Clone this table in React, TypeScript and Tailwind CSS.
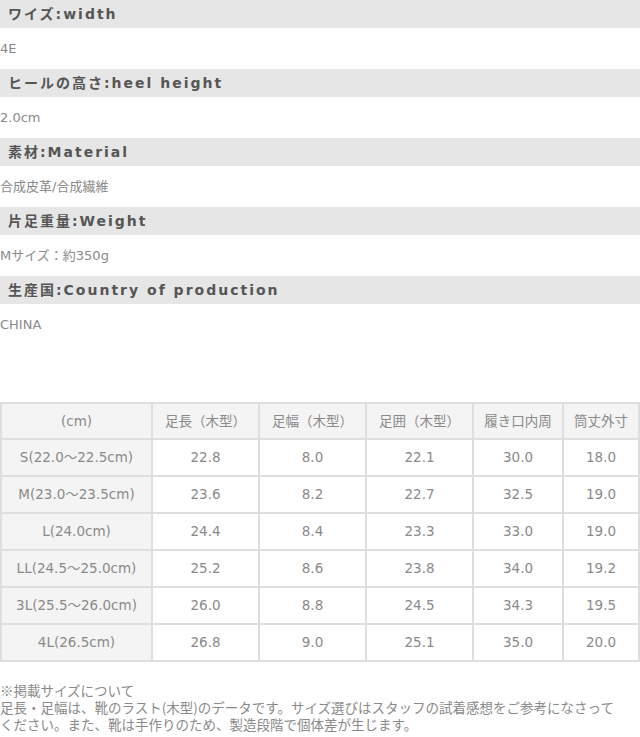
const SPECS = [
  { label: 'ワイズ:width', value: '4E' },
  { label: 'ヒールの高さ:heel height', value: '2.0cm' },
  { label: '素材:Material', value: '合成皮革/合成繊維' },
  { label: '片足重量:Weight', value: 'Mサイズ：約350g' },
  { label: '生産国:Country of production', value: 'CHINA' },
];

const COLUMNS = ['(cm)', '足長（木型）', '足幅（木型）', '足囲（木型）', '履き口内周', '筒丈外寸'];
const COL_WIDTHS = ['w-[151px]', 'w-[107px]', 'w-[107px]', 'w-[107px]', 'w-[90px]', 'w-[76px]'];

const ROWS = [
  ['S(22.0～22.5cm)', '22.8', '8.0', '22.1', '30.0', '18.0'],
  ['M(23.0～23.5cm)', '23.6', '8.2', '22.7', '32.5', '19.0'],
  ['L(24.0cm)', '24.4', '8.4', '23.3', '33.0', '19.0'],
  ['LL(24.5～25.0cm)', '25.2', '8.6', '23.8', '34.0', '19.2'],
  ['3L(25.5～26.0cm)', '26.0', '8.8', '24.5', '34.3', '19.5'],
  ['4L(26.5cm)', '26.8', '9.0', '25.1', '35.0', '20.0'],
];

function SpecBlock({ label, value }: { label: string; value: string }) {
  return (
    <div>
      <h3 className="flex h-[28px] items-center bg-[#e6e6e6] pl-2 text-[14px] font-bold tracking-[2px] text-[#555]">
        {label}
      </h3>
      <p className="flex h-[41px] items-center text-[13px] text-[#8a8a8a]">{value}</p>
    </div>
  );
}

export default function App() {
  return (
    <div
      className="w-[640px] bg-white"
      style={{ fontFamily: '"DejaVu Sans", "Noto Sans CJK JP", sans-serif' }}
    >
      {SPECS.map((s) => (
        <SpecBlock key={s.label} label={s.label} value={s.value} />
      ))}

      <table className="mt-[57px] w-[640px] table-fixed border-collapse text-[13.5px] text-[#8a8a8a]">
        <thead>
          <tr className="h-[36px]">
            {COLUMNS.map((c, i) => (
              <th
                key={c}
                className={`${COL_WIDTHS[i]} border-2 border-[#dedede] bg-[#f4f4f4] text-center font-normal`}
              >
                {c}
              </th>
            ))}
          </tr>
        </thead>
        <tbody>
          {ROWS.map((row) => (
            <tr key={row[0]} className="h-[37px]">
              {row.map((cell, i) => (
                <td
                  key={i}
                  className={`border-2 border-[#dedede] text-center ${i === 0 ? 'bg-[#f4f4f4]' : 'bg-white'}`}
                >
                  {cell}
                </td>
              ))}
            </tr>
          ))}
        </tbody>
      </table>

      <p
        className="mt-[20px] pb-[4px] text-[13.5px] leading-[17px] text-[#8a8a8a]"
        style={{ fontFamily: '"Noto Sans CJK JP", sans-serif' }}
      >
        ※掲載サイズについて
        <br />
        足長・足幅は、靴のラスト(木型)のデータです。サイズ選びはスタッフの試着感想をご参考になさって
        <br />
        ください。また、靴は手作りのため、製造段階で個体差が生じます。
      </p>
    </div>
  );
}
